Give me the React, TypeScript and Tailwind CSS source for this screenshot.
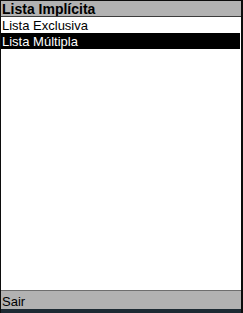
import React from 'react';

export default function App() {
  const items = [
    { label: 'Lista Exclusiva', selected: false },
    { label: 'Lista Múltipla', selected: true },
  ];

  return (
    <div
      className="w-[243px] h-[313px] bg-[#0c0c0c] pl-px pr-[2px] flex flex-col overflow-hidden text-[13px] leading-none text-black"
      style={{ fontFamily: '"Liberation Sans", Arial, sans-serif' }}
    >
      <div className="mt-px h-[15px] bg-[#b2b2b2] flex items-center pl-px font-bold text-[14px]">
        Lista Implícita
      </div>
      <div className="h-px bg-[#3c3c3c]" />
      <div className="flex-1 bg-white pr-px">
        {items.map((it) => (
          <div
            key={it.label}
            className={
              'h-[16px] flex items-center pl-px ' +
              (it.selected ? 'bg-black text-white' : 'bg-white text-black')
            }
          >
            {it.label}
          </div>
        ))}
      </div>
      <div className="h-px bg-[#6e6e6e]" />
      <div className="h-[18px] bg-[#b2b2b2] flex items-end pl-px pb-px">Sair</div>
      <div className="h-[4px] bg-[#1d2a33]" />
    </div>
  );
}
